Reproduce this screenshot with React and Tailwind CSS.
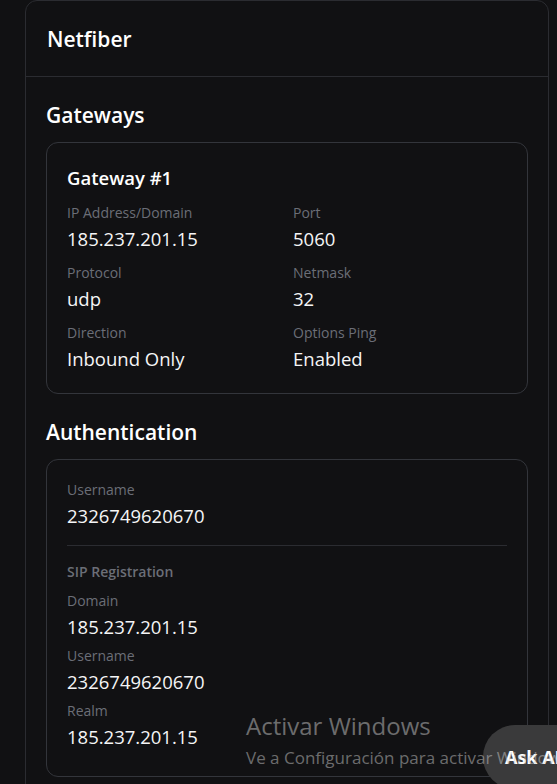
import React from "react";

function Field({ label, value }) {
  return (
    <div className="flex flex-col gap-0.5">
      <div className="text-sm leading-5 text-[#6b6e77]">{label}</div>
      <div className="text-[18.5px] leading-7 text-[#f5f5f6]">{value}</div>
    </div>
  );
}

export default function App() {
  return (
    <div
      className="relative min-h-[784px] bg-[#111113] overflow-hidden"
      style={{ fontFamily: '"Open Sans", "Noto Sans", sans-serif' }}
    >
      <div className="ml-[25px] w-[524px] h-[900px] rounded-xl border border-[#2b2c31] bg-[#111113]">
        <div className="px-[21px] pt-6 pb-[23px] border-b border-[#2b2c31]">
          <h1 className="text-[21px] leading-7 font-semibold text-white">Netfiber</h1>
        </div>
        <div className="px-5 pt-6">
          <h2 className="text-[21px] leading-7 font-semibold text-white mb-[13px]">Gateways</h2>
          <div className="rounded-xl border border-[#33353b] px-5 pt-[21px] pb-5">
            <h3 className="text-[18.5px] leading-7 font-semibold text-white mb-[11px]">Gateway #1</h3>
            <div className="grid grid-cols-2 gap-x-3 gap-y-2.5">
              <Field label="IP Address/Domain" value="185.237.201.15" />
              <Field label="Port" value="5060" />
              <Field label="Protocol" value="udp" />
              <Field label="Netmask" value="32" />
              <Field label="Direction" value="Inbound Only" />
              <Field label="Options Ping" value="Enabled" />
            </div>
          </div>

          <h2 className="mt-6 text-[21px] leading-7 font-semibold text-white mb-[13px]">Authentication</h2>
          <div className="rounded-xl border border-[#33353b] px-5 pt-5 pb-[25px]">
            <Field label="Username" value="2326749620670" />
            <div className="mt-[15px] mb-4 h-px bg-[#2b2c31]" />
            <div className="text-sm leading-5 font-semibold text-[#6b6e77] mb-[9px]">SIP Registration</div>
            <div className="flex flex-col gap-[5px]">
              <Field label="Domain" value="185.237.201.15" />
              <Field label="Username" value="2326749620670" />
              <Field label="Realm" value="185.237.201.15" />
            </div>
          </div>
        </div>
      </div>

      <div className="absolute left-[483px] top-[725px] w-[140px] h-[64px] rounded-full bg-[#3a3a3b] flex items-center pl-[22px]">
        <span className="text-lg font-bold text-white whitespace-nowrap">Ask AI</span>
      </div>

      <div className="absolute left-[246px] top-[710px] pointer-events-none whitespace-nowrap text-[rgba(200,200,200,0.5)]">
        <div className="text-2xl leading-8">Activar Windows</div>
        <div className="text-[17px] leading-6 mt-[4px]">Ve a Configuración para activar Windows.</div>
      </div>
    </div>
  );
}
